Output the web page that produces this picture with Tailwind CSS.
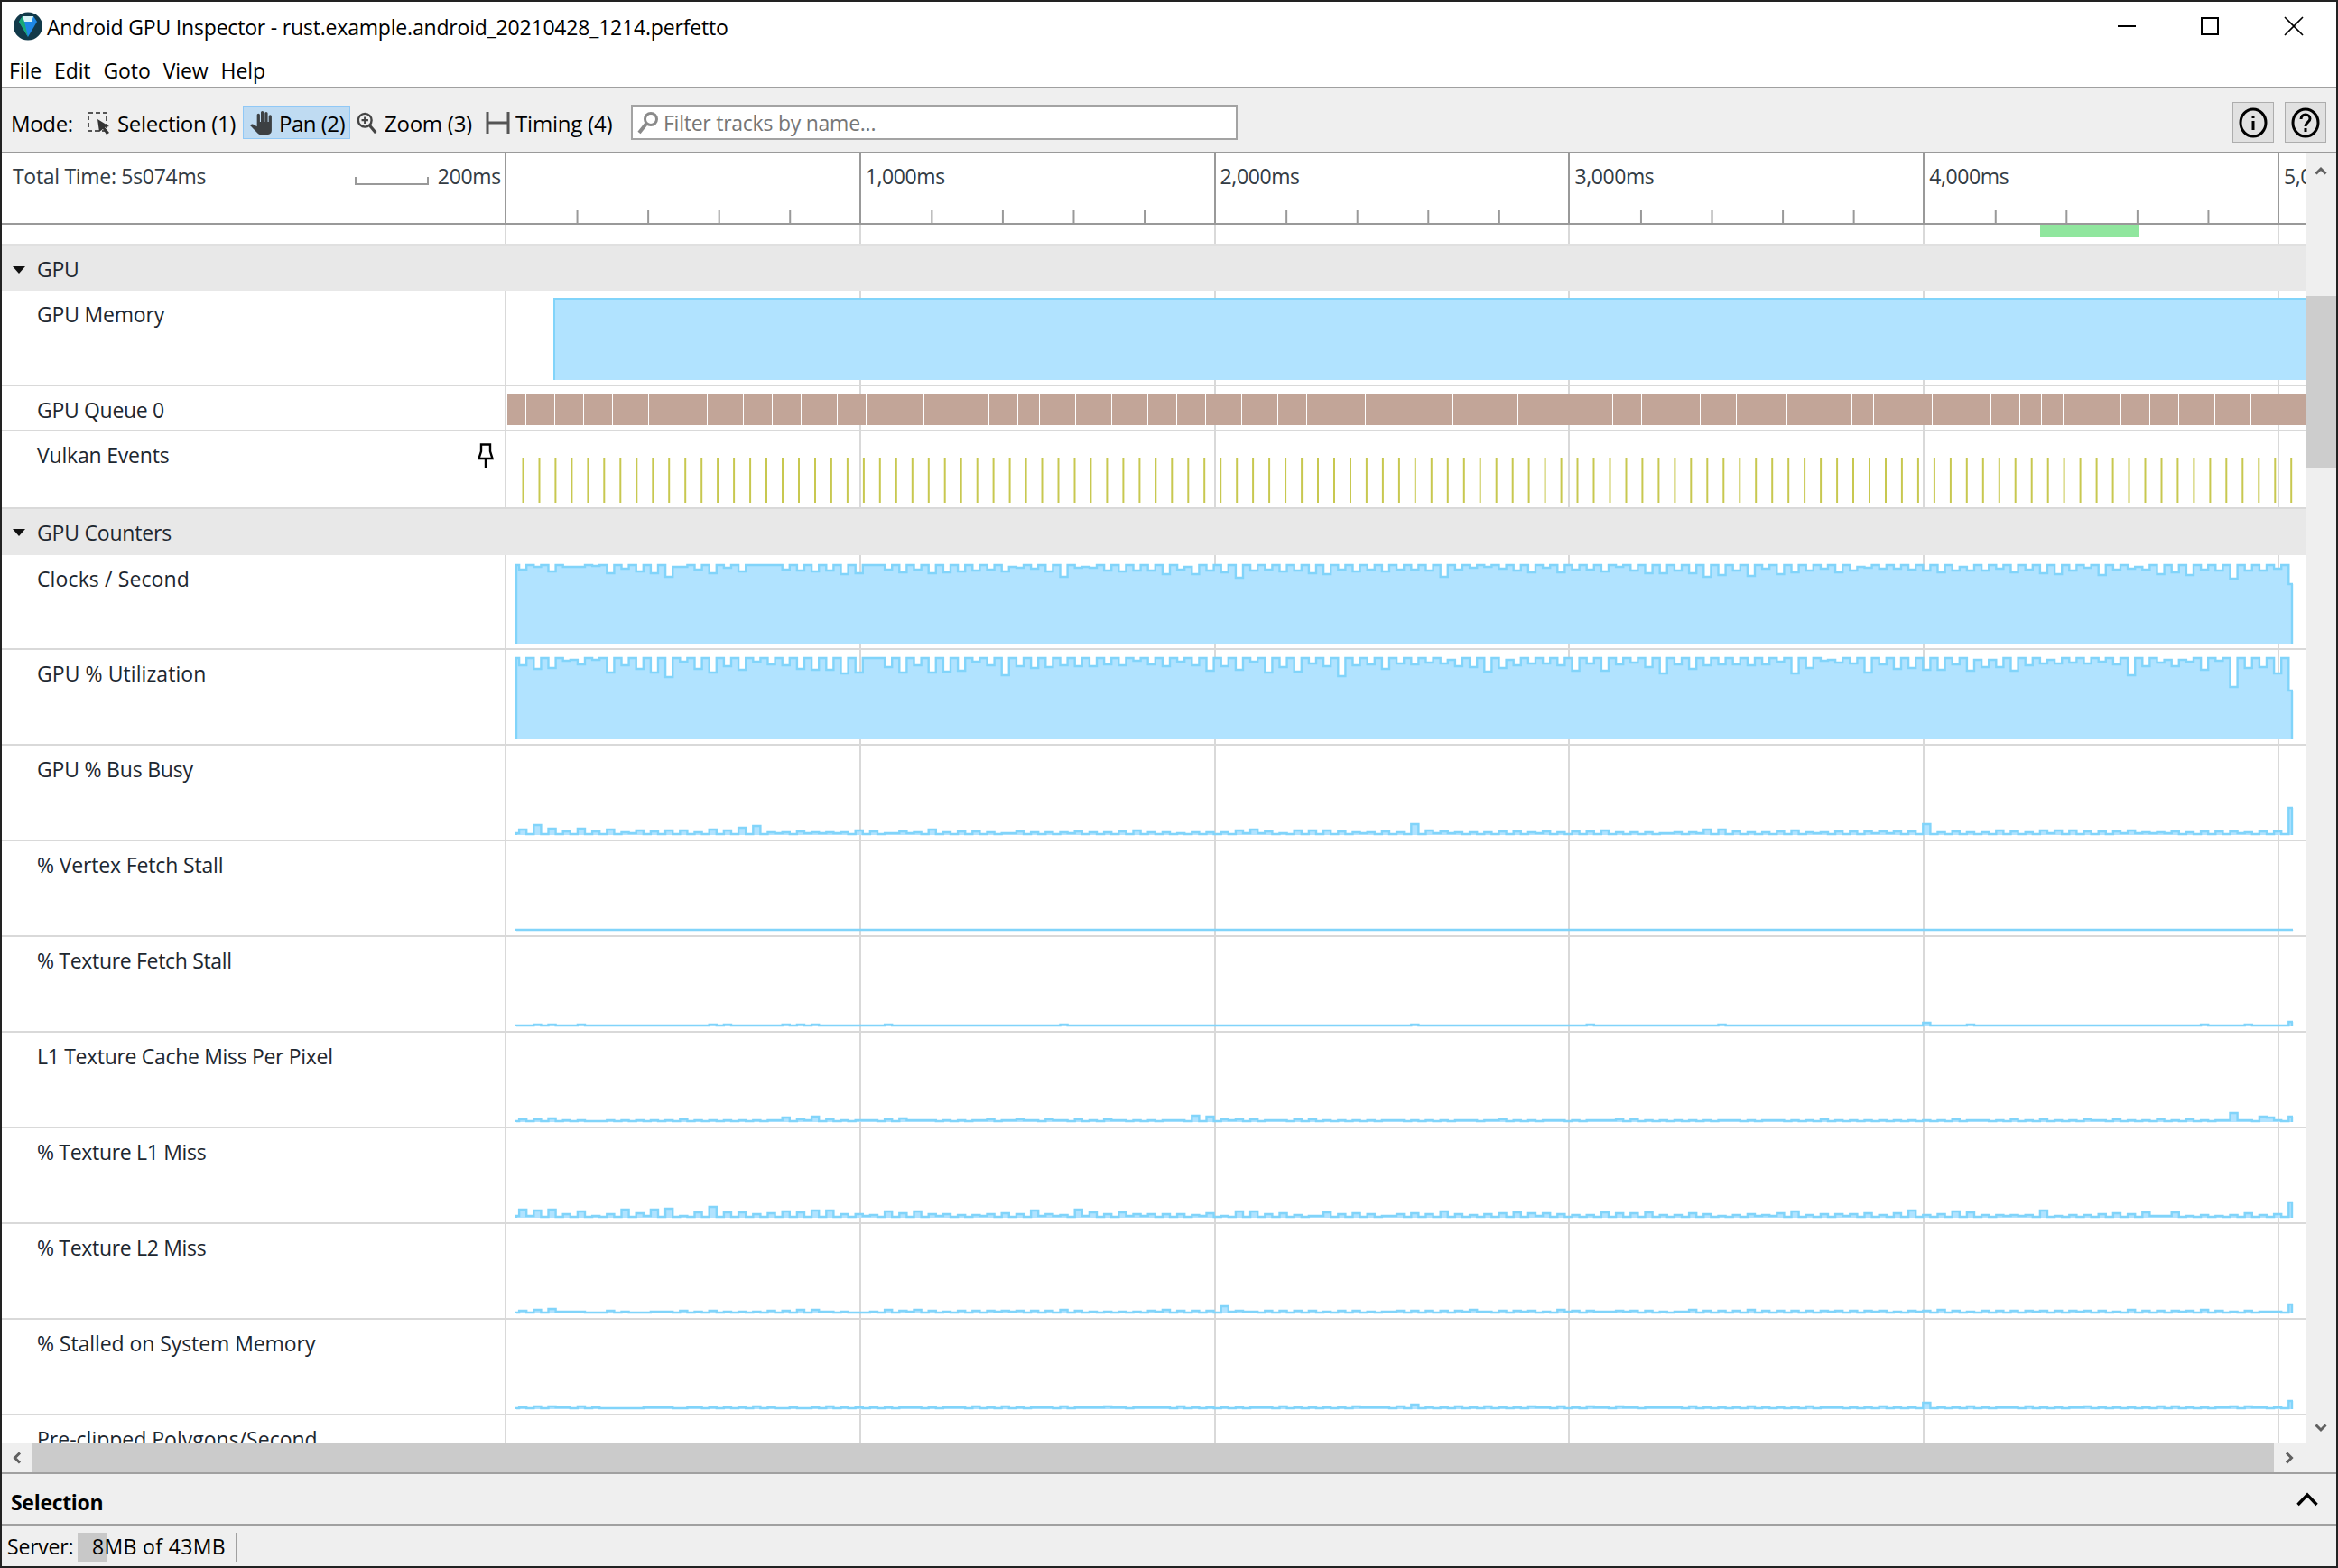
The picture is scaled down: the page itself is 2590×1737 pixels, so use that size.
<!DOCTYPE html>
<html lang="en">
<head>
  <meta charset="UTF-8" />
  <title>Android GPU Inspector</title>
  <script src="https://cdn.jsdelivr.net/npm/@tailwindcss/browser@4"></script>
</head>
<body class="w-[2590px] h-[1737px] overflow-hidden bg-[#222222] pt-[2px] pl-[2px] font-['Open_Sans',sans-serif] text-[23px] text-[#1d2730]">
  <div class="w-[2586px] h-[1733px] flex flex-col bg-white">

    <!-- title bar -->
    <div class="h-[60px] flex items-center shrink-0 pl-[12px] pb-[6px] text-black">
      <svg class="w-[34px] h-[32px] shrink-0" viewBox="0 0 34 32">
        <ellipse cx="17" cy="16" rx="16" ry="15.5" fill="#123a4a"/>
        <path d="M7 11 L11 5 H23 L27 11 L17 28 Z" fill="#1e88e5"/>
        <path d="M7 11 L11 5 L13 11 L17 28 Z" fill="#19a974"/>
        <path d="M11 5 H23 L21 11 H13 Z" fill="#d7f3f5"/>
      </svg>
      <span class="ml-[4px] mt-[3px] tracking-[-0.19px]">Android GPU Inspector - rust.example.android_20210428_1214.perfetto</span>
      <div class="ml-auto flex items-center">
        <svg class="w-[22px] h-[22px] mr-[70px]" viewBox="0 0 22 22"><path d="M1 11H21" stroke="#000" stroke-width="2"/></svg>
        <svg class="w-[22px] h-[22px] mr-[71px]" viewBox="0 0 22 22"><rect x="2" y="2" width="18" height="18" fill="none" stroke="#000" stroke-width="2"/></svg>
        <svg class="w-[22px] h-[22px] mr-[36px]" viewBox="0 0 22 22"><path d="M1 1L21 21M21 1L1 21" stroke="#000" stroke-width="1.6"/></svg>
      </div>
    </div>

    <!-- menu -->
    <div class="h-[36px] flex items-center shrink-0 border-b-2 border-[#a0a0a0] pl-[8px] pb-[1px] gap-[14px] text-black tracking-[-0.1px]">
      <span>File</span><span>Edit</span><span>Goto</span><span>View</span><span>Help</span>
    </div>

    <!-- toolbar -->
    <div class="h-[72px] flex items-center shrink-0 bg-[#efefef] border-b-2 border-[#9a9a9a] pl-[10px] pt-[5px] text-black text-[24px] tracking-[-0.35px]">
      <span class="w-[84px] mt-[2px]">Mode:</span>
      <svg class="w-[28px] h-[26px] shrink-0" viewBox="0 0 28 26">
        <rect x="2" y="2" width="20" height="20" fill="none" stroke="#555" stroke-width="2" stroke-dasharray="5 3"/>
        <path d="M12 9 L25 17 L20 18 L25 24 L22 26 L18 20 L14 23 Z" fill="#333"/>
      </svg>
      <span class="ml-[6px] mt-[2px] w-[139px] whitespace-nowrap">Selection (1)</span>
      <div class="w-[119px] h-[37px] flex items-center bg-[#bfdbf2] border border-[#90c8f6] tracking-[-0.5px]">
        <svg class="w-[26px] h-[28px] ml-[6px] shrink-0" viewBox="0 0 24 24" fill="#3c4043"><path d="M23 5.5V20c0 2.2-1.8 4-4 4h-7.3c-1.08 0-2.1-.43-2.85-1.19L1 14.83s1.26-1.23 1.3-1.25c.22-.19.49-.29.79-.29.22 0 .42.06.6.16.04.01 4.31 2.46 4.31 2.46V4c0-.83.67-1.5 1.5-1.5S11 3.17 11 4v7h1V1.5c0-.83.67-1.5 1.5-1.5S15 .67 15 1.5V11h1V2.5c0-.83.67-1.5 1.5-1.5s1.5.67 1.5 1.5V11h1V5.5c0-.83.67-1.5 1.5-1.5s1.5.67 1.5 1.5z"/></svg>
        <span class="ml-[7px] mt-[2px] whitespace-nowrap">Pan (2)</span>
      </div>
      <svg class="ml-[7px] w-[24px] h-[24px] shrink-0" viewBox="2 1 24 26" fill="none" stroke="#444">
        <circle cx="11" cy="11" r="8" stroke-width="2.6"/>
        <path d="M16.5 17 L24 26" stroke-width="3.4"/>
        <path d="M7 11H15M11 7V15" stroke-width="2.4"/>
      </svg>
      <span class="ml-[7px] mt-[2px] w-[112px] whitespace-nowrap tracking-[-0.25px]">Zoom (3)</span>
      <svg class="w-[27px] h-[24px] shrink-0" viewBox="0 0 27 24" fill="none" stroke="#555" stroke-width="3"><path d="M2 0V24M25 0V24M2 12H25"/></svg>
      <span class="ml-[6px] mt-[2px] w-[128px] whitespace-nowrap tracking-[-0.2px]">Timing (4)</span>
      <div class="w-[672px] h-[39px] flex items-center bg-white border-2 border-[#a3a3a3] text-[#767676] text-[23px] tracking-[-0.25px]">
        <svg class="w-[24px] h-[26px] ml-[5px] shrink-0" viewBox="0 0 24 26" fill="none" stroke="#8a8a8a"><circle cx="15" cy="9" r="6.5" stroke-width="3"/><path d="M10 14 L2 24" stroke-width="4"/></svg>
        <span class="ml-[5px] mt-[2px]">Filter tracks by name...</span>
      </div>
      <button class="ml-auto w-[46px] h-[45px] flex items-center justify-center bg-[#e1e1e1] border border-[#adadad]">
        <svg class="w-[32px] h-[34px]" viewBox="0 0 32 34" fill="none" stroke="#000"><ellipse cx="16" cy="17" rx="14" ry="15" stroke-width="3"/><path d="M16 15V25" stroke-width="3"/><path d="M16 9V12" stroke-width="3"/></svg>
      </button>
      <button class="ml-[12px] mr-[11px] w-[46px] h-[45px] flex items-center justify-center bg-[#e1e1e1] border border-[#adadad]">
        <svg class="w-[32px] h-[34px]" viewBox="0 0 32 34" fill="none" stroke="#000"><ellipse cx="16" cy="17" rx="14" ry="15" stroke-width="3"/><path d="M11 13c0-3 2-5 5-5s5 2 5 4.500c0 4-5 4-5 8.500" stroke-width="3"/><path d="M16 23V27" stroke-width="3"/></svg>
      </button>
    </div>

    <!-- timeline + tracks + vertical scrollbar -->
    <div class="h-[1428px] flex shrink-0">
      <div class="w-[2552px] flex flex-col overflow-hidden">

        <!-- ruler -->
        <div class="relative h-[79px] flex shrink-0 border-b-2 border-[#999999] text-[#333c44]">
          <div class="w-[557px] shrink-0 flex pt-[8px] pl-[12px] pr-[4px] tracking-[-0.3px]">
            <span>Total Time: 5s074ms</span>
            <svg class="ml-auto mt-[18px] w-[82px] h-[10px]" viewBox="0 0 82 10" fill="none" stroke="#999" stroke-width="2"><path d="M1 0V8H81V0"/></svg>
            <span class="ml-[10px]">200ms</span>
          </div>
          <div class="flex-1 flex overflow-hidden tracking-[-0.4px]">
            <div class="w-[392.8px] shrink-0 border-l-2 border-[#999999] pl-[5px] pt-[8px]"></div>
            <div class="w-[392.8px] shrink-0 border-l-2 border-[#999999] pl-[5px] pt-[8px]">1,000ms</div>
            <div class="w-[392.8px] shrink-0 border-l-2 border-[#999999] pl-[5px] pt-[8px]">2,000ms</div>
            <div class="w-[392.8px] shrink-0 border-l-2 border-[#999999] pl-[5px] pt-[8px]">3,000ms</div>
            <div class="w-[392.8px] shrink-0 border-l-2 border-[#999999] pl-[5px] pt-[8px]">4,000ms</div>
            <div class="w-[392.8px] shrink-0 border-l-2 border-[#999999] pl-[5px] pt-[8px]">5,000ms</div>
          </div>
          <svg id="ticks" class="absolute left-[557px] bottom-0 w-[1995px] h-[14px]"></svg>
        </div>

        <!-- tracks -->
        <div class="relative flex-1 overflow-hidden tracking-[-0.32px]">
          <div class="absolute inset-y-0 left-[557px] right-0 flex">
            <div class="w-[392.8px] shrink-0 border-l-2 border-[#d9d9d9]"></div>
            <div class="w-[392.8px] shrink-0 border-l-2 border-[#d9d9d9]"></div>
            <div class="w-[392.8px] shrink-0 border-l-2 border-[#d9d9d9]"></div>
            <div class="w-[392.8px] shrink-0 border-l-2 border-[#d9d9d9]"></div>
            <div class="w-[392.8px] shrink-0 border-l-2 border-[#d9d9d9]"></div>
            <div class="w-[392.8px] shrink-0 border-l-2 border-[#d9d9d9]"></div>
          </div>
          <div class="absolute top-0 left-[2258px] w-[110px] h-[14px] bg-[#90e69e]"></div>

          <div class="relative flex flex-col">
            <div class="h-[23px] border-b-2 border-[#e0e0e0]"></div>

            <div class="h-[50px] flex items-center bg-[#e8e8e8] pl-[12px] pt-[3px]">
              <svg class="w-[14px] h-[8px]" viewBox="0 0 14 8"><path d="M0 0H14L7 8Z" fill="#111"/></svg>
              <span class="ml-[13px]">GPU</span>
            </div>
            <div class="h-[106px] flex border-b-2 border-[#d9d9d9]">
              <div class="w-[559px] shrink-0 pl-[39px] pt-[9px] tracking-[-0.2px]">GPU Memory</div>
              <svg id="memory" class="w-[1993px] h-full"></svg>
            </div>
            <div class="h-[50px] flex border-b-2 border-[#d9d9d9]">
              <div class="w-[559px] shrink-0 pl-[39px] pt-[9px]">GPU Queue 0</div>
              <svg id="queue" class="w-[1993px] h-full"></svg>
            </div>
            <div class="h-[86px] flex border-b-2 border-[#d9d9d9]">
              <div class="w-[559px] shrink-0 flex pl-[39px] pt-[9px] tracking-[-0.2px]">
                <span>Vulkan Events</span>
                <svg class="ml-auto mr-[14px] mt-[4px] w-[18px] h-[27px]" viewBox="0 0 18 27" fill="none" stroke="#000" stroke-width="2.4"><path d="M4 1.500H14V9L16.500 17H1.500L4 9Z"/><path d="M9 17V27"/></svg>
              </div>
              <svg id="vulkan" class="w-[1993px] h-full"></svg>
            </div>

            <div class="h-[51px] flex items-center bg-[#e8e8e8] pl-[12px] pt-[1px]">
              <svg class="w-[14px] h-[8px]" viewBox="0 0 14 8"><path d="M0 0H14L7 8Z" fill="#111"/></svg>
              <span class="ml-[13px] tracking-[-0.2px]">GPU Counters</span>
            </div>
            <div class="h-[105px] flex border-b-2 border-[#d9d9d9]">
              <div class="w-[559px] shrink-0 pl-[39px] pt-[9px] tracking-[0.12px]">Clocks / Second</div>
              <svg id="clocks" class="w-[1993px] h-full"></svg>
            </div>
            <div class="h-[106px] flex border-b-2 border-[#d9d9d9]">
              <div class="w-[559px] shrink-0 pl-[39px] pt-[9px] tracking-[0.07px]">GPU % Utilization</div>
              <svg id="util" class="w-[1993px] h-full"></svg>
            </div>
            <div class="h-[106px] flex border-b-2 border-[#d9d9d9]">
              <div class="w-[559px] shrink-0 pl-[39px] pt-[9px] tracking-[-0.2px]">GPU % Bus Busy</div>
              <svg id="bus" class="w-[1993px] h-full"></svg>
            </div>
            <div class="h-[106px] flex border-b-2 border-[#d9d9d9]">
              <div class="w-[559px] shrink-0 pl-[39px] pt-[9px] tracking-[-0.15px]">% Vertex Fetch Stall</div>
              <svg id="vertex" class="w-[1993px] h-full"></svg>
            </div>
            <div class="h-[106px] flex border-b-2 border-[#d9d9d9]">
              <div class="w-[559px] shrink-0 pl-[39px] pt-[9px]">% Texture Fetch Stall</div>
              <svg id="texfetch" class="w-[1993px] h-full"></svg>
            </div>
            <div class="h-[106px] flex border-b-2 border-[#d9d9d9]">
              <div class="w-[559px] shrink-0 pl-[39px] pt-[9px]">L1 Texture Cache Miss Per Pixel</div>
              <svg id="l1cache" class="w-[1993px] h-full"></svg>
            </div>
            <div class="h-[106px] flex border-b-2 border-[#d9d9d9]">
              <div class="w-[559px] shrink-0 pl-[39px] pt-[9px]">% Texture L1 Miss</div>
              <svg id="l1miss" class="w-[1993px] h-full"></svg>
            </div>
            <div class="h-[106px] flex border-b-2 border-[#d9d9d9]">
              <div class="w-[559px] shrink-0 pl-[39px] pt-[9px]">% Texture L2 Miss</div>
              <svg id="l2miss" class="w-[1993px] h-full"></svg>
            </div>
            <div class="h-[106px] flex border-b-2 border-[#d9d9d9]">
              <div class="w-[559px] shrink-0 pl-[39px] pt-[9px] tracking-[-0.07px]">% Stalled on System Memory</div>
              <svg id="stalled" class="w-[1993px] h-full"></svg>
            </div>
            <div class="h-[106px] flex">
              <div class="w-[559px] shrink-0 pl-[39px] pt-[9px] tracking-[0px]">Pre-clipped Polygons/Second</div>
            </div>
          </div>
        </div>
      </div>

      <!-- vertical scrollbar -->
      <div class="w-[34px] shrink-0 flex flex-col items-center bg-[#efefef]">
        <div class="h-[158px] w-full flex justify-center pt-[14px] shrink-0">
          <svg class="w-[14px] h-[10px]" viewBox="0 0 14 10" fill="none" stroke="#606060" stroke-width="3"><path d="M1.500 8.500L7 3L12.500 8.500"/></svg>
        </div>
        <div class="h-[190px] w-full bg-[#cdcdcd] shrink-0"></div>
        <svg class="mt-auto mb-[11px] w-[14px] h-[10px]" viewBox="0 0 14 10" fill="none" stroke="#606060" stroke-width="3"><path d="M1.500 1.500L7 7L12.500 1.500"/></svg>
      </div>
    </div>

    <!-- horizontal scrollbar -->
    <div class="h-[35px] shrink-0 flex items-center bg-[#efefef] border-b-2 border-[#a0a0a0]">
      <div class="w-[33px] flex justify-center shrink-0">
        <svg class="w-[10px] h-[14px]" viewBox="0 0 10 14" fill="none" stroke="#606060" stroke-width="3"><path d="M8 1.500L2.500 7L8 12.500"/></svg>
      </div>
      <div class="w-[2484px] h-[32px] bg-[#cbcbcb]"></div>
      <div class="w-[33px] flex justify-center shrink-0">
        <svg class="w-[10px] h-[14px]" viewBox="0 0 10 14" fill="none" stroke="#606060" stroke-width="3"><path d="M2 1.500L7.500 7L2 12.500"/></svg>
      </div>
    </div>

    <!-- selection panel -->
    <div class="h-[57px] shrink-0 flex items-center bg-[#efefef] border-b-2 border-[#a0a0a0] pl-[10px] pr-[20px] text-black">
      <span class="mt-[8px] font-bold tracking-[-0.3px]">Selection</span>
      <svg class="ml-auto w-[24px] h-[16px]" viewBox="0 0 24 16" fill="none" stroke="#000" stroke-width="3.400"><path d="M1.500 14L12 3L22.500 14"/></svg>
    </div>

    <!-- status bar -->
    <div class="h-[45px] shrink-0 flex items-center bg-[#efefef] pl-[6px] text-black pt-[2px]">
      <span class="w-[78px] tracking-[-0.2px]">Server:</span>
      <div class="relative w-[176px] h-[32px] flex items-center border-r border-[#a0a0a0]">
        <div class="absolute inset-y-0 left-0 w-[32px] bg-[#c8c8c8]"></div>
        <span class="relative ml-[16px] tracking-[0.35px]">8MB of 43MB</span>
      </div>
    </div>
  </div>

  <script>
    // seeded so the picture stays the same between runs
    let seed = 7;
    function rnd() {
      seed = (seed * 16807) % 2147483647;
      return seed / 2147483647;
    }

    const FILL = "#b1e3ff";
    const LINE = "#81d4fa";
    const BINS = 244;
    const END = 1979;

    function binX(i) {
      if (i == 0) return 10;
      return Math.min(END, 10 + i * 8.1 - 4);
    }

    // counters near the top of the track: every other bin dips a bit
    function dippy(first, scale) {
      const out = [];
      for (let i = 0; i < BINS; i++) {
        if (i % 2 == 0) { out.push(rnd() < 0.08 ? 2 : 0); continue; }
        const k = (i - 1) / 2;
        if (k < first.length) out.push(first[k]);
        else out.push(Math.round(rnd() * rnd() * scale + rnd() * scale * 0.5 + 2));
      }
      return out;
    }

    // low counters: bumps on a flat base line
    function bumpy(first, scale) {
      const out = [];
      for (let i = 0; i < BINS; i++) {
        if (i % 2 == 0) { out.push(rnd() < 0.2 ? 2 : 1); continue; }
        const k = (i - 1) / 2;
        if (k < first.length) out.push(first[k]);
        else out.push(2 + Math.round(rnd() * rnd() * scale + rnd() * scale * 0.3));
      }
      return out;
    }

    function draw(id, topY, bottomY, offsets) {
      const ys = offsets.map(v => topY + v);
      let top = "";
      ys.forEach((y, i) => {
        top += "L" + binX(i).toFixed(1) + " " + y + "L" + binX(i + 1).toFixed(1) + " " + y;
      });
      document.getElementById(id).innerHTML =
        '<path d="M10 ' + bottomY + top + "L" + END + " " + bottomY + 'Z" fill="' + FILL + '"/>' +
        '<path d="M11 ' + bottomY + top.replace("L10.0", "L11.0") + "L" + (END - 1) + " " + ys[ys.length - 1] + "L" + (END - 1) + " " + bottomY + '" fill="none" stroke="' + LINE + '" stroke-width="2.4"/>';
    }

    function drawLow(id, data) {
      draw(id, 0, 99, data.map(v => 99 - v));
    }

    // ruler ticks
    let t = "";
    for (let i = 0; i < 26; i++) {
      const x = 2 + i * 78.56;
      if (i % 5 != 0) t += '<path d="M' + x + ' 0V14" stroke="#999" stroke-width="2"/>';
    }
    document.getElementById("ticks").innerHTML = t;

    // memory
    document.getElementById("memory").innerHTML =
      '<rect x="52" y="8" width="1941" height="91" fill="' + FILL + '"/>' +
      '<path d="M53 99V9H1993" fill="none" stroke="' + LINE + '" stroke-width="2"/>';

    // queue blocks
    const widths = [21, 32, 32, 32, 40, 65, 40, 32, 32, 40, 32, 32, 32, 40, 32];
    const more = [32, 40, 40, 32, 40, 32, 65, 40, 32, 24];
    let q = "", x = 1, n = 0;
    while (x < 1993) {
      const w = n < widths.length ? widths[n] : more[Math.floor(rnd() * 10)];
      q += '<rect x="' + x + '" y="9" width="' + (w - 1) + '" height="34" fill="#c2a598"/>';
      x += w;
      n++;
    }
    document.getElementById("queue").innerHTML = q;

    // vulkan ticks
    let v = "";
    for (let i = 0; i < 110; i++) {
      const tx = 18.5 + i * 17.97;
      v += '<path d="M' + tx.toFixed(1) + ' 29V79" stroke="#c8c850" stroke-width="2"/>';
    }
    document.getElementById("vulkan").innerHTML = v;

    // counters
    const clocks = dippy([5, 2, 7, 2, 2, 1, 9, 4, 7, 9, 13, 2, 5, 9, 3, 7, 0, 0, 5, 6, 7, 6, 10, 9, 0, 5, 8, 5, 9, 8], 9);
    clocks[235] = 15; clocks[243] = 21;
    draw("clocks", 11, 98, clocks);

    const util = dippy([8, 12, 11, 3, 7, 2, 16, 8, 12, 16, 21, 4, 12, 16, 9, 13, 4, 7, 8, 12, 13, 13, 17, 16, 0, 10, 16, 8, 16, 15], 15);
    util[235] = 32; util[243] = 36;
    draw("util", 9, 99, util);

    const bus = bumpy([6, 11, 7, 4, 7, 4, 6, 3, 5, 4, 5, 5, 3, 6, 5, 8, 10, 3, 3, 4], 4);
    bus[123] = 12; bus[193] = 12; bus[243] = 30;
    drawLow("bus", bus);

    drawLow("vertex", new Array(BINS).fill(1));

    const fetch2 = new Array(BINS).fill(1);
    [3, 5, 9, 27, 29, 36, 38, 40, 51, 75, 123, 147, 165, 199, 231, 237].forEach(i => { fetch2[i | 1] = 2; });
    fetch2[193] = 4; fetch2[243] = 5;
    drawLow("texfetch", fetch2);

    const l1c = bumpy([3, 3, 4, 2, 2, 1, 2, 2, 2, 2, 2, 3, 2, 2, 2, 2, 2, 2, 5, 3, 6, 3, 2, 2, 2, 3, 4, 2, 2, 2], 1);
    l1c[93] = 7; l1c[95] = 6; l1c[235] = 10; l1c[239] = 6; l1c[240] = 5; l1c[243] = 6;
    drawLow("l1cache", l1c);

    const l1m = bumpy([9, 8, 9, 4, 7, 2, 4, 9, 5, 9, 10, 2, 6, 12, 6, 6, 4, 5, 7, 6, 8, 8, 4, 4, 3, 7, 5, 7, 4, 4], 6);
    l1m[243] = 17;
    drawLow("l1miss", l1m);

    const l2m = bumpy([3, 4, 5, 2, 2, 1, 3, 2, 1, 2, 2, 3, 2, 3, 2, 2, 2, 3, 3, 4, 4, 2, 2, 1, 2, 4, 3, 4, 3, 2], 2);
    l2m[97] = 8; l2m[243] = 10;
    drawLow("l2miss", l2m);

    const st = bumpy([2, 3, 3, 2, 3, 2, 1, 1, 1, 2, 2, 1, 2, 2, 2, 2, 3, 2, 1, 1, 2, 3, 2, 2, 2, 2, 2, 2, 2, 2], 1);
    st[123] = 5; st[193] = 7; st[243] = 9;
    drawLow("stalled", st);
  </script>
</body>
</html>
